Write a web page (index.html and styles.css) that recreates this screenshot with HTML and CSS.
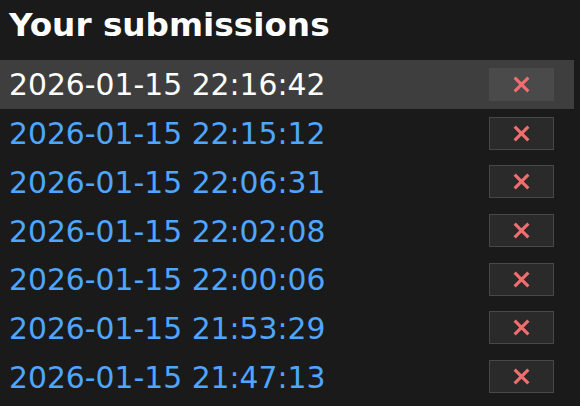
FILE: index.html
```html
<!DOCTYPE html>
<html>
<head>
<meta charset="utf-8">
<link rel="stylesheet" href="styles.css">
</head>
<body>
<div class="panel">
  <h2 class="title">Your submissions</h2>
  <ul class="list">
    <li class="row active"><span class="stamp">2026-01-15 22:16:42</span><button class="del" aria-label="Delete"><svg class="x" viewBox="0 0 18 18"><path d="M2.5 2.5L15.5 15.5M15.5 2.5L2.5 15.5"/></svg></button></li>
    <li class="row"><span class="stamp">2026-01-15 22:15:12</span><button class="del" aria-label="Delete"><svg class="x" viewBox="0 0 18 18"><path d="M2.5 2.5L15.5 15.5M15.5 2.5L2.5 15.5"/></svg></button></li>
    <li class="row"><span class="stamp">2026-01-15 22:06:31</span><button class="del" aria-label="Delete"><svg class="x" viewBox="0 0 18 18"><path d="M2.5 2.5L15.5 15.5M15.5 2.5L2.5 15.5"/></svg></button></li>
    <li class="row"><span class="stamp">2026-01-15 22:02:08</span><button class="del" aria-label="Delete"><svg class="x" viewBox="0 0 18 18"><path d="M2.5 2.5L15.5 15.5M15.5 2.5L2.5 15.5"/></svg></button></li>
    <li class="row"><span class="stamp">2026-01-15 22:00:06</span><button class="del" aria-label="Delete"><svg class="x" viewBox="0 0 18 18"><path d="M2.5 2.5L15.5 15.5M15.5 2.5L2.5 15.5"/></svg></button></li>
    <li class="row"><span class="stamp">2026-01-15 21:53:29</span><button class="del" aria-label="Delete"><svg class="x" viewBox="0 0 18 18"><path d="M2.5 2.5L15.5 15.5M15.5 2.5L2.5 15.5"/></svg></button></li>
    <li class="row"><span class="stamp">2026-01-15 21:47:13</span><button class="del" aria-label="Delete"><svg class="x" viewBox="0 0 18 18"><path d="M2.5 2.5L15.5 15.5M15.5 2.5L2.5 15.5"/></svg></button></li>
  </ul>
</div>
</body>
</html>
```
FILE: styles.css
```css
html, body {
  margin: 0;
  padding: 0;
  background: #1a1a1a;
}
.panel {
  width: 574px;
  font-family: "DejaVu Sans", Verdana, sans-serif;
}
.title {
  margin: 0;
  padding: 4px 9px 0;
  height: 60px;
  box-sizing: border-box;
  font-size: 32.7px;
  font-weight: bold;
  color: #ffffff;
  line-height: 42px;
}
.list {
  list-style: none;
  margin: 0;
  padding: 0;
}
.row {
  display: flex;
  align-items: center;
  justify-content: space-between;
  height: 48.7px;
  padding: 0 20px 0 9px;
  box-sizing: border-box;
}
.row.active {
  background: #3e3e3e;
}
.stamp {
  font-size: 29.8px;
  color: #4ea6ff;
  line-height: 1;
  padding-top: 2px;
}
.row.active .stamp {
  color: #ffffff;
}
.del {
  width: 65px;
  height: 33px;
  box-sizing: border-box;
  background: #2a2a2a;
  border: 1px solid #484848;
  padding: 0;
  display: flex;
  align-items: center;
  justify-content: center;
}
.row.active .del {
  background: #4a4a4a;
  border-color: #4a4a4a;
}
.x {
  width: 19px;
  height: 19px;
  fill: none;
  stroke: #f26d6d;
  stroke-width: 3;
}
```
